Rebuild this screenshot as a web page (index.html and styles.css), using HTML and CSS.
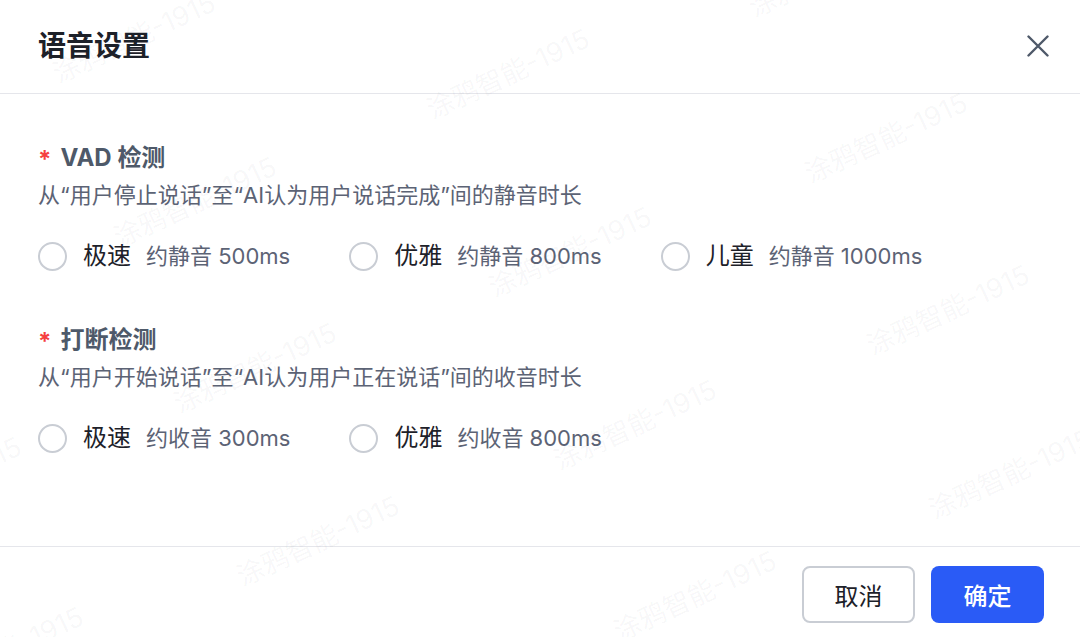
FILE: index.html
```html
<!DOCTYPE html>
<html lang="zh-CN">
<head>
<meta charset="utf-8">
<title>语音设置</title>
<link rel="stylesheet" href="styles.css">
</head>
<body>
<div class="dialog">
  <header class="dlg-header">
    <h1 class="dlg-title">语音设置</h1>
    <button class="dlg-close" aria-label="关闭">
      <svg width="22" height="22" viewBox="0 0 22 22"><path d="M1.5 1.5 L20.5 20.5 M20.5 1.5 L1.5 20.5" stroke="#4e5969" stroke-width="2.4" stroke-linecap="round" fill="none"/></svg>
    </button>
  </header>

  <main class="dlg-body">
    <section class="field">
      <div class="field-label"><span class="req">*</span>VAD 检测</div>
      <div class="field-desc">从“用户停止说话”至“AI认为用户说话完成”间的静音时长</div>
      <div class="options">
        <label class="opt"><span class="radio"></span><span class="opt-name">极速</span><span class="opt-sub">约静音 500ms</span></label>
        <label class="opt"><span class="radio"></span><span class="opt-name">优雅</span><span class="opt-sub">约静音 800ms</span></label>
        <label class="opt"><span class="radio"></span><span class="opt-name">儿童</span><span class="opt-sub">约静音 1000ms</span></label>
      </div>
    </section>

    <section class="field field-2">
      <div class="field-label"><span class="req">*</span>打断检测</div>
      <div class="field-desc">从“用户开始说话”至“AI认为用户正在说话”间的收音时长</div>
      <div class="options">
        <label class="opt"><span class="radio"></span><span class="opt-name">极速</span><span class="opt-sub">约收音 300ms</span></label>
        <label class="opt"><span class="radio"></span><span class="opt-name">优雅</span><span class="opt-sub">约收音 800ms</span></label>
      </div>
    </section>
  </main>

  <footer class="dlg-footer">
    <button class="btn btn-cancel">取消</button>
    <button class="btn btn-ok">确定</button>
  </footer>

  <div class="watermarks" aria-hidden="true">
    <span class="wm wm1">涂鸦智能-1915</span>
    <span class="wm wm2">涂鸦智能-1915</span>
    <span class="wm wm3">涂鸦智能-1915</span>
    <span class="wm wm4">涂鸦智能-1915</span>
    <span class="wm wm5">涂鸦智能-1915</span>
    <span class="wm wm6">涂鸦智能-1915</span>
    <span class="wm wm7">涂鸦智能-1915</span>
    <span class="wm wm8">涂鸦智能-1915</span>
    <span class="wm wm9">涂鸦智能-1915</span>
    <span class="wm wm10">涂鸦智能-1915</span>
    <span class="wm wm11">涂鸦智能-1915</span>
    <span class="wm wm12">涂鸦智能-1915</span>
    <span class="wm wm13">涂鸦智能-1915</span>
    <span class="wm wm14">涂鸦智能-1915</span>
  </div>
</div>
</body>
</html>
```

FILE: styles.css
```css
* { box-sizing: border-box; }

html, body {
  margin: 0;
  padding: 0;
  background: #ffffff;
}

body {
  font-family: "Inter", "Noto Sans CJK SC", "Noto Sans", sans-serif;
  color: #1d2129;
  width: 1080px;
  height: 637px;
  overflow: hidden;
}

.dialog {
  position: relative;
  width: 1080px;
  height: 637px;
  background: #fff;
  display: flex;
  flex-direction: column;
}

.dlg-header {
  height: 94px;
  flex: 0 0 94px;
  display: flex;
  align-items: center;
  justify-content: space-between;
  padding: 0 31px 1px 38px;
  border-bottom: 1px solid #e5e6eb;
}

.dlg-title {
  margin: 0;
  font-size: 28px;
  font-weight: 700;
  color: #1d2129;
  line-height: 36px;
}

.dlg-close {
  border: 0;
  background: none;
  padding: 0;
  width: 22px;
  height: 22px;
  display: flex;
  cursor: pointer;
}

.dlg-body {
  flex: 0 0 453px;
  height: 453px;
  padding: 48px 38px 0 38px;
  border-bottom: 1px solid #e5e6eb;
}

.field-2 { margin-top: 48px; }

.field-label {
  display: flex;
  align-items: center;
  font-size: 24px;
  line-height: 32px;
  font-weight: 700;
  color: #4e5969;
}

.req {
  color: #f53f3f;
  font-size: 24px;
  font-weight: 700;
  margin-right: 9px;
  position: relative;
  top: 2px;
}

.field-desc {
  margin-top: 6px;
  font-size: 22px;
  line-height: 30px;
  color: #5c6375;
}

.options {
  margin-top: 26px;
  display: flex;
  align-items: center;
  gap: 59px;
  height: 40px;
}

.opt {
  display: flex;
  align-items: center;
  cursor: pointer;
}

.radio {
  width: 29px;
  height: 29px;
  border: 2px solid #c9cdd4;
  border-radius: 50%;
  background: #fff;
  flex: 0 0 auto;
}

.opt-name {
  margin-left: 16px;
  font-size: 24px;
  line-height: 32px;
  font-weight: 400;
  color: #1d2129;
}

.opt-sub {
  margin-left: 15px;
  font-size: 22px;
  line-height: 30px;
  color: #5c6375;
}

.dlg-footer {
  flex: 1 1 auto;
  display: flex;
  justify-content: flex-end;
  align-items: flex-start;
  gap: 16px;
  padding: 19px 36px 0 0;
}

.btn {
  height: 57px;
  width: 113px;
  border-radius: 8px;
  font-family: "Inter", "Noto Sans CJK SC", sans-serif;
  font-size: 24px;
  cursor: pointer;
}

.btn-cancel {
  background: #fff;
  border: 2px solid #c9cdd4;
  color: #1d2129;
}

.btn-ok {
  background: #2a5bf6;
  border: 0;
  color: #fff;
  font-weight: 500;
}

.watermarks {
  position: absolute;
  inset: 0;
  overflow: hidden;
  pointer-events: none;
}

.wm {
  position: absolute;
  white-space: nowrap;
  font-size: 27px;
  line-height: 1;
  color: rgba(40, 50, 70, 0.045);
  transform: translate(-50%, -50%) rotate(-25deg);
}

.wm1  { left: 134px;  top: 38px; }
.wm2  { left: 508px;  top: 74px; }
.wm3  { left: 830px;  top: -28px; }
.wm4  { left: 195px;  top: 202px; }
.wm5  { left: 570px;  top: 252px; }
.wm6  { left: 886px;  top: 138px; }
.wm7  { left: 255px;  top: 368px; }
.wm8  { left: 635px;  top: 425px; }
.wm9  { left: 948px;  top: 310px; }
.wm10 { left: -60px;  top: 482px; }
.wm11 { left: 318px;  top: 541px; }
.wm12 { left: 695px;  top: 596px; }
.wm13 { left: 1010px; top: 474px; }
.wm14 { left: 2px;    top: 652px; }
```
